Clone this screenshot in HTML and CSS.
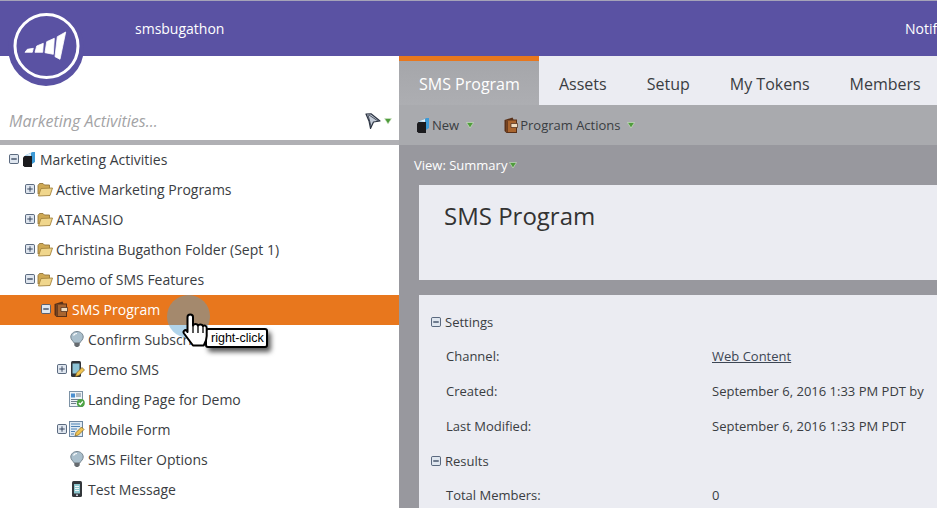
FILE: index.html
```html
<!DOCTYPE html>
<html lang="en">
<head>
  <meta charset="UTF-8">
  <title>SMS Program</title>
  <link rel="stylesheet" href="styles.css">
</head>
<body>
  <svg class="defs" width="0" height="0">
    <symbol id="i-plus" viewBox="0 0 11 11">
      <rect x=".5" y=".5" width="10" height="10" rx="1.500" fill="#dfe6ef" stroke="#46566e"/>
      <path d="M2.500 5.500h6M5.500 2.500v6" stroke="#2c3c56"/>
    </symbol>
    <symbol id="i-minus" viewBox="0 0 11 11">
      <rect x=".5" y=".5" width="10" height="10" rx="1.500" fill="#dfe6ef" stroke="#46566e"/>
      <path d="M2.500 5.500h6" stroke="#2c3c56" stroke-width="1.400"/>
    </symbol>
    <symbol id="i-book" viewBox="0 0 16 16">
      <path d="M4 4.500 11.500 1H14v10l-3 2z" fill="#3d9ad6"/>
      <path d="M3.500 4.500 10 2v3z" fill="#e4eef5"/>
      <path d="M2 6.500 3.500 5H11v11H3.500L2 14.500z" fill="#1b1b1e"/>
    </symbol>
    <symbol id="i-folder" viewBox="0 0 16 16">
      <path d="M1 13V4.500L2.500 2.500H6L7.500 4h5v4z" fill="#cfa955" stroke="#94763a" stroke-width=".9"/>
      <path d="M1.500 15 4 7.500 15.500 7 13 14.500z" fill="#f0d68c" stroke="#a5853e" stroke-width=".9" stroke-linejoin="round"/>
    </symbol>
    <symbol id="i-program" viewBox="0 0 16 16">
      <path d="M1.500 3 9.500.5 10.500 2.500H14V16H3.500L1.500 14z" fill="#5a3118"/>
      <path d="M3.500 3.500H13V15H3.500z" fill="#a9652f"/>
      <path d="M8 6.500h6.500v4H8z" fill="#f0dcc0" stroke="#4a2a17" stroke-width=".7"/>
      <path d="M3.500 3.500H5V15H3.500z" fill="#6d3d1e"/>
    </symbol>
    <symbol id="i-bulb" viewBox="0 0 16 16">
      <path d="M8 .5C4.300.5 1.800 3 1.800 6c0 2.700 2.300 3.800 3.200 5.800h6c.9-2 3.200-3.100 3.200-5.800C14.200 3 11.700.5 8 .5z" fill="#aabfcc" stroke="#76858f"/>
      <path d="M4.500 4.500C5 3 6.500 2.500 8 2.500" fill="none" stroke="#fff" stroke-width="1.200"/>
      <path d="M5.300 12h5.400v2.500L9 16H7l-1.700-1.500z" fill="#666b6f"/>
    </symbol>
    <symbol id="i-sms-edit" viewBox="0 0 16 16">
      <rect x="2" y="0" width="10" height="16" rx="1.500" fill="#2f3338"/>
      <rect x="3.500" y="2.500" width="7" height="10" fill="#8dc3d6"/>
      <path d="M6.500 15.500 7.500 12 13 6.500l2.500 2.500L10 14.500z" fill="#f0c452" stroke="#7d5f1c" stroke-width=".7"/>
    </symbol>
    <symbol id="i-page" viewBox="0 0 16 16">
      <rect x=".5" y=".5" width="13" height="15" fill="#eef3f7" stroke="#7d92a5"/>
      <rect x="2" y="2.500" width="4" height="4" fill="#4b8fd0"/>
      <path d="M7 3h5M7 5h5M2 8.500h10M2 10.500h6M2 12.500h5" stroke="#6f7f8c"/>
      <circle cx="11.800" cy="12" r="4" fill="#4da344"/>
      <path d="m9.800 12 1.500 1.500 2.500-3" fill="none" stroke="#fff" stroke-width="1.200"/>
    </symbol>
    <symbol id="i-form" viewBox="0 0 16 16">
      <rect x=".5" y=".5" width="13" height="15" fill="#dfeaf3" stroke="#6d86a0"/>
      <path d="M2 3h9M2 5.500h9M2 8h6M2 10.500h4M2 13h3" stroke="#4f83b5"/>
      <path d="M6 15 7 11.500 12.500 6l2.500 2.500L9.500 14z" fill="#f0c452" stroke="#7d5f1c" stroke-width=".7"/>
    </symbol>
    <symbol id="i-phone" viewBox="0 0 16 16">
      <rect x="3" y="0" width="10" height="16" rx="1.500" fill="#33373b"/>
      <rect x="5" y="3" width="6" height="9.500" fill="#8fc8cf"/>
      <path d="M6 5.500h4M6 7.500h4M6 9.500h4" stroke="#f2f7f8"/>
      <rect x="7" y="13.500" width="2" height="1.500" fill="#ccd"/>
    </symbol>
    <symbol id="i-caret" viewBox="0 0 8 8">
      <path d="M.5 1.500h7L4 7z" fill="#4f9c3c" stroke="#d7e8cf" stroke-width=".6"/>
    </symbol>
  </svg>

  <header class="topbar">
    <span class="topbar-name">smsbugathon</span>
    <span class="topbar-notif">Notifications</span>
  </header>

  <div class="logo">
    <svg viewBox="0 0 76 76" width="76" height="76">
      <circle cx="38" cy="38" r="38" fill="#5a52a3"/>
      <circle cx="38.500" cy="36" r="31.500" fill="none" stroke="#fff" stroke-width="3"/>
      <path d="M25.300 38.300 19.300 39.300 17 42.300H24.300z M35.300 33.300 28.700 36 27 42.300H34.700z M46.300 28.300 38.700 31.700 37 42.700 45.300 44.300z M57.700 22 49.300 26.700 47 46.700 52 49.300z" fill="#fff" stroke="#fff" stroke-width=".8" stroke-linejoin="round"/>
    </svg>
  </div>

  <div class="layout">
    <aside class="sidebar">
      <div class="search">
        <span class="search-text">Marketing Activities...</span>
        <svg class="search-icon" width="16" height="16" viewBox="0 0 16 16">
          <path d="M1 1 6 .8 15 8 8.500 9 5.500 15.500 4 8z" fill="#c4ccd8" stroke="#2c3442" stroke-width="1.200" stroke-linejoin="round"/>
          <path d="M3 2 6 13M4 2l9 6" stroke="#2c3442" stroke-width=".8"/>
        </svg>
        <svg class="caret" width="8" height="8"><use href="#i-caret"/></svg>
      </div>
      <ul class="tree">
        <li class="row lvl0"><svg class="toggle"><use href="#i-minus"/></svg><svg class="icon"><use href="#i-book"/></svg>Marketing Activities</li>
        <li class="row lvl1"><svg class="toggle"><use href="#i-plus"/></svg><svg class="icon"><use href="#i-folder"/></svg>Active Marketing Programs</li>
        <li class="row lvl1"><svg class="toggle"><use href="#i-plus"/></svg><svg class="icon"><use href="#i-folder"/></svg>ATANASIO</li>
        <li class="row lvl1"><svg class="toggle"><use href="#i-plus"/></svg><svg class="icon"><use href="#i-folder"/></svg>Christina Bugathon Folder (Sept 1)</li>
        <li class="row lvl1"><svg class="toggle"><use href="#i-minus"/></svg><svg class="icon"><use href="#i-folder"/></svg>Demo of SMS Features</li>
        <li class="row lvl2 selected"><svg class="toggle"><use href="#i-minus"/></svg><svg class="icon"><use href="#i-program"/></svg>SMS Program</li>
        <li class="row lvl3"><span class="toggle"></span><svg class="icon"><use href="#i-bulb"/></svg>Confirm Subscri</li>
        <li class="row lvl3"><svg class="toggle"><use href="#i-plus"/></svg><svg class="icon"><use href="#i-sms-edit"/></svg>Demo SMS</li>
        <li class="row lvl3"><span class="toggle"></span><svg class="icon"><use href="#i-page"/></svg>Landing Page for Demo</li>
        <li class="row lvl3"><svg class="toggle"><use href="#i-plus"/></svg><svg class="icon"><use href="#i-form"/></svg>Mobile Form</li>
        <li class="row lvl3"><span class="toggle"></span><svg class="icon"><use href="#i-bulb"/></svg>SMS Filter Options</li>
        <li class="row lvl3"><span class="toggle"></span><svg class="icon"><use href="#i-phone"/></svg>Test Message</li>
      </ul>
    </aside>

    <main class="content">
      <nav class="tabs">
        <span class="tab active">SMS Program</span>
        <span class="tab">Assets</span>
        <span class="tab">Setup</span>
        <span class="tab">My Tokens</span>
        <span class="tab">Members</span>
      </nav>
      <div class="toolbar">
        <span class="tool"><svg class="icon-sm"><use href="#i-book"/></svg>New<svg class="caret" width="8" height="8"><use href="#i-caret"/></svg></span>
        <span class="tool"><svg class="icon-sm"><use href="#i-program"/></svg>Program Actions<svg class="caret" width="8" height="8"><use href="#i-caret"/></svg></span>
      </div>
      <div class="canvas">
        <div class="view">View: Summary<svg class="caret" width="8" height="8"><use href="#i-caret"/></svg></div>
        <section class="card title-card"><h1>SMS Program</h1></section>
        <section class="card details">
          <div class="section-head"><svg class="toggle"><use href="#i-minus"/></svg>Settings</div>
          <div class="field"><span class="key">Channel:</span><a class="val link">Web Content</a></div>
          <div class="field"><span class="key">Created:</span><span class="val">September 6, 2016 1:33 PM PDT by</span></div>
          <div class="field"><span class="key">Last Modified:</span><span class="val">September 6, 2016 1:33 PM PDT</span></div>
          <div class="section-head"><svg class="toggle"><use href="#i-minus"/></svg>Results</div>
          <div class="field"><span class="key">Total Members:</span><span class="val">0</span></div>
        </section>
      </div>
    </main>
  </div>

  <div class="halo"></div>
  <div class="tip">right-click</div>
  <svg class="hand" width="26" height="34" viewBox="0 0 26 34">
    <path d="M5.500 4c0-3.500 5.500-3.500 5.500 0v8.500c1-2 4-2 5 0 1-1.500 4-1.500 5 .5 1-1 3.700-.5 3.700 2V23c0 4-1.500 7-3 9.500H11L2 20.500c-1.500-2.200 1-4.500 3-2.500l.5 1z" fill="#fff" stroke="#000" stroke-width="2" stroke-linejoin="round"/>
    <path d="M11 12.500V20M16 12.500V20M21 13V20" stroke="#000" stroke-width="1.300"/>
  </svg>
</body>
</html>
```

FILE: styles.css
```css
* { box-sizing: border-box; }
html, body { margin: 0; height: 100%; overflow: hidden; }
body { font-family: "Open Sans", sans-serif; font-size: 14px; color: #3a3d42; background: #fff; }
.defs { position: absolute; }

.topbar { display: flex; align-items: center; height: 56px; padding-left: 135px; background: #5a52a3; border-top: 1px solid #a5a3b8; color: #fff; white-space: nowrap; }
.topbar-notif { margin-left: auto; width: 32px; overflow: hidden; }

.logo { position: absolute; left: 8px; top: 10px; width: 76px; height: 76px; }

.layout { display: flex; height: 452px; }

.sidebar { width: 399px; flex: none; overflow: hidden; }
.search { display: flex; align-items: center; height: 89px; padding: 46px 7px 0 9px; border-bottom: 5px solid #b0b0b4; }
.search-text { flex: 1; font-size: 16px; font-style: italic; color: #a3a3a5; }
.search-icon { margin-right: 3px; }

.tree { list-style: none; margin: 0; padding: 0; }
.row { display: flex; align-items: center; height: 30px; padding-bottom: 2px; white-space: nowrap; }
.lvl0 { padding-left: 8px; }
.lvl1 { padding-left: 24px; }
.lvl2 { padding-left: 40px; }
.lvl3 { padding-left: 56px; }
.selected { background: #e8771d; color: #fff; }
.toggle { display: block; flex: none; width: 10px; height: 10px; margin: 0 2px 0 1px; }
.icon { display: block; flex: none; width: 16px; height: 16px; margin-right: 3px; }
.icon-sm { width: 16px; height: 16px; margin-right: 1px; }

.content { flex: 1; min-width: 0; display: flex; flex-direction: column; }
.tabs { display: flex; flex: none; height: 49px; background: #ebecf2; font-size: 16px; white-space: nowrap; }
.tab { display: flex; align-items: center; padding: 7px 20px 0; }
.tab.active { background: linear-gradient(#a5a6aa, #adaeb2); border-top: 5px solid #e8771d; padding-top: 2px; color: #fff; width: 140px; }

.toolbar { display: flex; flex: none; align-items: center; gap: 29px; height: 40px; padding-left: 16px; background: #a9aaae; font-size: 13px; }
.tool { display: flex; align-items: center; }
.tool .caret { margin-left: 7px; }

.canvas { flex: 1; min-height: 0; padding-left: 20px; background: #98989e; }
.view { display: flex; align-items: center; height: 40px; margin-left: -5px; color: #fff; font-size: 13px; }
.view .caret { margin-left: 2px; }

.card { background: #ebecf2; }
.title-card { height: 95px; margin-bottom: 15px; padding: 14px 25px; }
.title-card h1 { margin: 0; font-size: 24px; font-weight: 400; line-height: 33px; color: #333; }

.details { padding: 9px 0 0 13px; font-size: 13px; }
.section-head { display: flex; align-items: center; height: 34.75px; padding-top: 2px; }
.section-head .toggle { margin: 0 4px 0 -1px; }
.field { display: flex; align-items: center; height: 34.75px; padding-left: 14px; }
.key { width: 266px; flex: none; }
.val { white-space: nowrap; }
.link { text-decoration: underline; color: #3d4654; }

.halo { position: absolute; left: 167px; top: 295px; width: 43px; height: 43px; border-radius: 50%; background: rgba(82, 160, 208, .45); }
.tip { position: absolute; left: 205px; top: 328px; height: 20px; padding: 0 2px 0 4px; background: #fff; border: 2px solid #000; border-radius: 3px; box-shadow: 3px 4px 5px rgba(0, 0, 0, .65); font-family: "Liberation Sans", sans-serif; font-size: 12.5px; line-height: 16px; color: #000; }
.hand { position: absolute; left: 182px; top: 313px; }
```
